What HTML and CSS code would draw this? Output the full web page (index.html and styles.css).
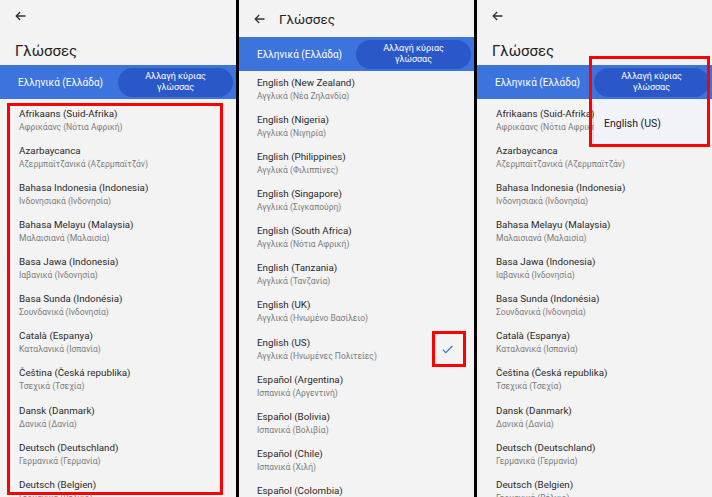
FILE: index.html
```html
<!DOCTYPE html>
<html lang="el">
<head>
    <meta charset="UTF-8">
    <title>Γλώσσες</title>
    <link rel="stylesheet" href="styles.css">
</head>
<body>
    <div class="screens">
        <!-- screen 1: full header -->
        <div class="phone">
            <div class="header">
                <div class="topbar">
                    <svg class="back" width="11" height="10" viewBox="0 0 11 10"><path d="M10.5 5H1.2M5.2 1L1.2 5l4 4" fill="none" stroke="#333" stroke-width="1.3"/></svg>
                </div>
                <div class="title">Γλώσσες</div>
            </div>
            <div class="bar">
                <span class="bar-label">Ελληνικά (Ελλάδα)</span>
                <button class="main-btn">Αλλαγή κύριας<br>γλώσσας</button>
            </div>
            <div class="list list-a">
                <div class="item"><div class="name">Afrikaans (Suid-Afrika)</div><div class="sub">Αφρικάανς (Νότια Αφρική)</div></div>
                <div class="item"><div class="name">Azarbaycanca</div><div class="sub">Αζερμπαϊτζανικά (Αζερμπαϊτζάν)</div></div>
                <div class="item"><div class="name">Bahasa Indonesia (Indonesia)</div><div class="sub">Ινδονησιακά (Ινδονησία)</div></div>
                <div class="item"><div class="name">Bahasa Melayu (Malaysia)</div><div class="sub">Μαλαισιανά (Μαλαισία)</div></div>
                <div class="item"><div class="name">Basa Jawa (Indonesia)</div><div class="sub">Ιαβανικά (Ινδονησία)</div></div>
                <div class="item"><div class="name">Basa Sunda (Indonésia)</div><div class="sub">Σουνδανικά (Ινδονησία)</div></div>
                <div class="item"><div class="name">Català (Espanya)</div><div class="sub">Καταλανικά (Ισπανία)</div></div>
                <div class="item"><div class="name">Čeština (Česká republika)</div><div class="sub">Τσεχικά (Τσεχία)</div></div>
                <div class="item"><div class="name">Dansk (Danmark)</div><div class="sub">Δανικά (Δανία)</div></div>
                <div class="item"><div class="name">Deutsch (Deutschland)</div><div class="sub">Γερμανικά (Γερμανία)</div></div>
                <div class="item"><div class="name">Deutsch (Belgien)</div><div class="sub">Γερμανικά (Βέλγιο)</div></div>
            </div>
            <div class="mark mark-list"></div>
        </div>

        <!-- screen 2: collapsed header, scrolled -->
        <div class="phone">
            <div class="header header-small">
                <svg class="back" width="11" height="10" viewBox="0 0 11 10"><path d="M10.5 5H1.2M5.2 1L1.2 5l4 4" fill="none" stroke="#333" stroke-width="1.3"/></svg>
                <div class="title-small">Γλώσσες</div>
            </div>
            <div class="bar">
                <span class="bar-label">Ελληνικά (Ελλάδα)</span>
                <button class="main-btn">Αλλαγή κύριας<br>γλώσσας</button>
            </div>
            <div class="list list-b">
                <div class="item"><div class="name">English (New Zealand)</div><div class="sub">Αγγλικά (Νέα Ζηλανδία)</div></div>
                <div class="item"><div class="name">English (Nigeria)</div><div class="sub">Αγγλικά (Νιγηρία)</div></div>
                <div class="item"><div class="name">English (Philippines)</div><div class="sub">Αγγλικά (Φιλιππίνες)</div></div>
                <div class="item"><div class="name">English (Singapore)</div><div class="sub">Αγγλικά (Σιγκαπούρη)</div></div>
                <div class="item"><div class="name">English (South Africa)</div><div class="sub">Αγγλικά (Νότια Αφρική)</div></div>
                <div class="item"><div class="name">English (Tanzania)</div><div class="sub">Αγγλικά (Τανζανία)</div></div>
                <div class="item"><div class="name">English (UK)</div><div class="sub">Αγγλικά (Ηνωμένο Βασίλειο)</div></div>
                <div class="item item-checked">
                    <div><div class="name">English (US)</div><div class="sub">Αγγλικά (Ηνωμένες Πολιτείες)</div></div>
                    <svg class="check" width="11" height="9" viewBox="0 0 11 9"><path d="M0.8 4.6l3 3L10.3 1" fill="none" stroke="#3a6fdc" stroke-width="1.2"/></svg>
                </div>
                <div class="item"><div class="name">Español (Argentina)</div><div class="sub">Ισπανικά (Αργεντινή)</div></div>
                <div class="item"><div class="name">Español (Bolivia)</div><div class="sub">Ισπανικά (Βολιβία)</div></div>
                <div class="item"><div class="name">Español (Chile)</div><div class="sub">Ισπανικά (Χιλή)</div></div>
                <div class="item"><div class="name">Español (Colombia)</div><div class="sub">Ισπανικά (Κολομβία)</div></div>
            </div>
            <div class="mark mark-check"></div>
        </div>

        <!-- screen 3: dropdown open -->
        <div class="phone">
            <div class="header">
                <div class="topbar">
                    <svg class="back" width="11" height="10" viewBox="0 0 11 10"><path d="M10.5 5H1.2M5.2 1L1.2 5l4 4" fill="none" stroke="#333" stroke-width="1.3"/></svg>
                </div>
                <div class="title">Γλώσσες</div>
            </div>
            <div class="bar">
                <span class="bar-label">Ελληνικά (Ελλάδα)</span>
                <button class="main-btn">Αλλαγή κύριας<br>γλώσσας</button>
            </div>
            <div class="list list-a">
                <div class="item"><div class="name">Afrikaans (Suid-Afrika)</div><div class="sub">Αφρικάανς (Νότια Αφρική)</div></div>
                <div class="item"><div class="name">Azarbaycanca</div><div class="sub">Αζερμπαϊτζανικά (Αζερμπαϊτζάν)</div></div>
                <div class="item"><div class="name">Bahasa Indonesia (Indonesia)</div><div class="sub">Ινδονησιακά (Ινδονησία)</div></div>
                <div class="item"><div class="name">Bahasa Melayu (Malaysia)</div><div class="sub">Μαλαισιανά (Μαλαισία)</div></div>
                <div class="item"><div class="name">Basa Jawa (Indonesia)</div><div class="sub">Ιαβανικά (Ινδονησία)</div></div>
                <div class="item"><div class="name">Basa Sunda (Indonésia)</div><div class="sub">Σουνδανικά (Ινδονησία)</div></div>
                <div class="item"><div class="name">Català (Espanya)</div><div class="sub">Καταλανικά (Ισπανία)</div></div>
                <div class="item"><div class="name">Čeština (Česká republika)</div><div class="sub">Τσεχικά (Τσεχία)</div></div>
                <div class="item"><div class="name">Dansk (Danmark)</div><div class="sub">Δανικά (Δανία)</div></div>
                <div class="item"><div class="name">Deutsch (Deutschland)</div><div class="sub">Γερμανικά (Γερμανία)</div></div>
                <div class="item"><div class="name">Deutsch (Belgien)</div><div class="sub">Γερμανικά (Βέλγιο)</div></div>
            </div>
            <div class="dropdown">English (US)</div>
            <div class="mark mark-menu"></div>
        </div>
    </div>
</body>
</html>
```

FILE: styles.css
```css
body {
    margin: 0;
    background-color: #000;
    font-family: Roboto, "Noto Sans", Arial, sans-serif;
}
.screens {
    display: grid;
    grid-template-columns: 236px 235px 235px;
    column-gap: 3px;
    height: 497px;
    overflow: hidden;
}
.phone {
    position: relative;
    background-color: #f3f3f3;
    overflow: hidden;
    height: 497px;
}
.header {
    height: 65px;
    display: flex;
    flex-direction: column;
}
.topbar {
    height: 32px;
    display: flex;
    align-items: center;
    padding-left: 15px;
}
.back {
    display: block;
}
.title {
    margin-top: 9px;
    padding-left: 15px;
    font-size: 15px;
    line-height: 20px;
    color: #222;
}
.header-small {
    height: 37px;
    flex-direction: row;
    align-items: center;
    padding-left: 15px;
    box-sizing: border-box;
}
.title-small {
    margin-left: 14px;
    font-size: 13.5px;
    color: #222;
}
.bar {
    height: 34px;
    background-color: #3d73dd;
    display: flex;
    align-items: center;
    justify-content: space-between;
    padding: 0 3px 0 18px;
}
.bar-label {
    color: #fff;
    font-size: 10px;
}
.main-btn {
    width: 115px;
    height: 29px;
    border: none;
    border-radius: 15px;
    background-color: #2b58c9;
    color: #fff;
    font-family: inherit;
    font-size: 9px;
    line-height: 11px;
    padding: 0;
}
.list-a {
    padding-top: 2px;
}
.list-b {
    margin-top: -1px;
}
.item {
    height: 37.15px;
    box-sizing: border-box;
    padding: 5.5px 0 0 19px;
}
.list-b .item {
    padding-left: 18px;
}
.name {
    font-size: 9.8px;
    line-height: 14px;
    color: #2a2a2a;
}
.sub {
    font-size: 8.5px;
    line-height: 12px;
    color: #7c7c7c;
}
.item-checked {
    display: flex;
    justify-content: space-between;
    align-items: center;
    padding-top: 0;
    padding-right: 21px;
}
.check {
    display: block;
    margin-top: 2px;
}
.dropdown {
    position: absolute;
    left: 117px;
    top: 100px;
    width: 118px;
    height: 45px;
    box-sizing: border-box;
    padding: 17px 0 0 10px;
    background-color: #f1f3f8;
    box-shadow: -1px 1px 3px rgba(0,0,0,0.12);
    font-size: 10.5px;
    color: #222;
}
.mark {
    position: absolute;
    border: 3px solid #f00;
    box-sizing: border-box;
}
.mark-list {
    left: 7px;
    top: 103px;
    width: 216px;
    height: 392px;
}
.mark-check {
    left: 193px;
    top: 331px;
    width: 34px;
    height: 36px;
}
.mark-menu {
    left: 112px;
    top: 56px;
    width: 121px;
    height: 91px;
}
```
